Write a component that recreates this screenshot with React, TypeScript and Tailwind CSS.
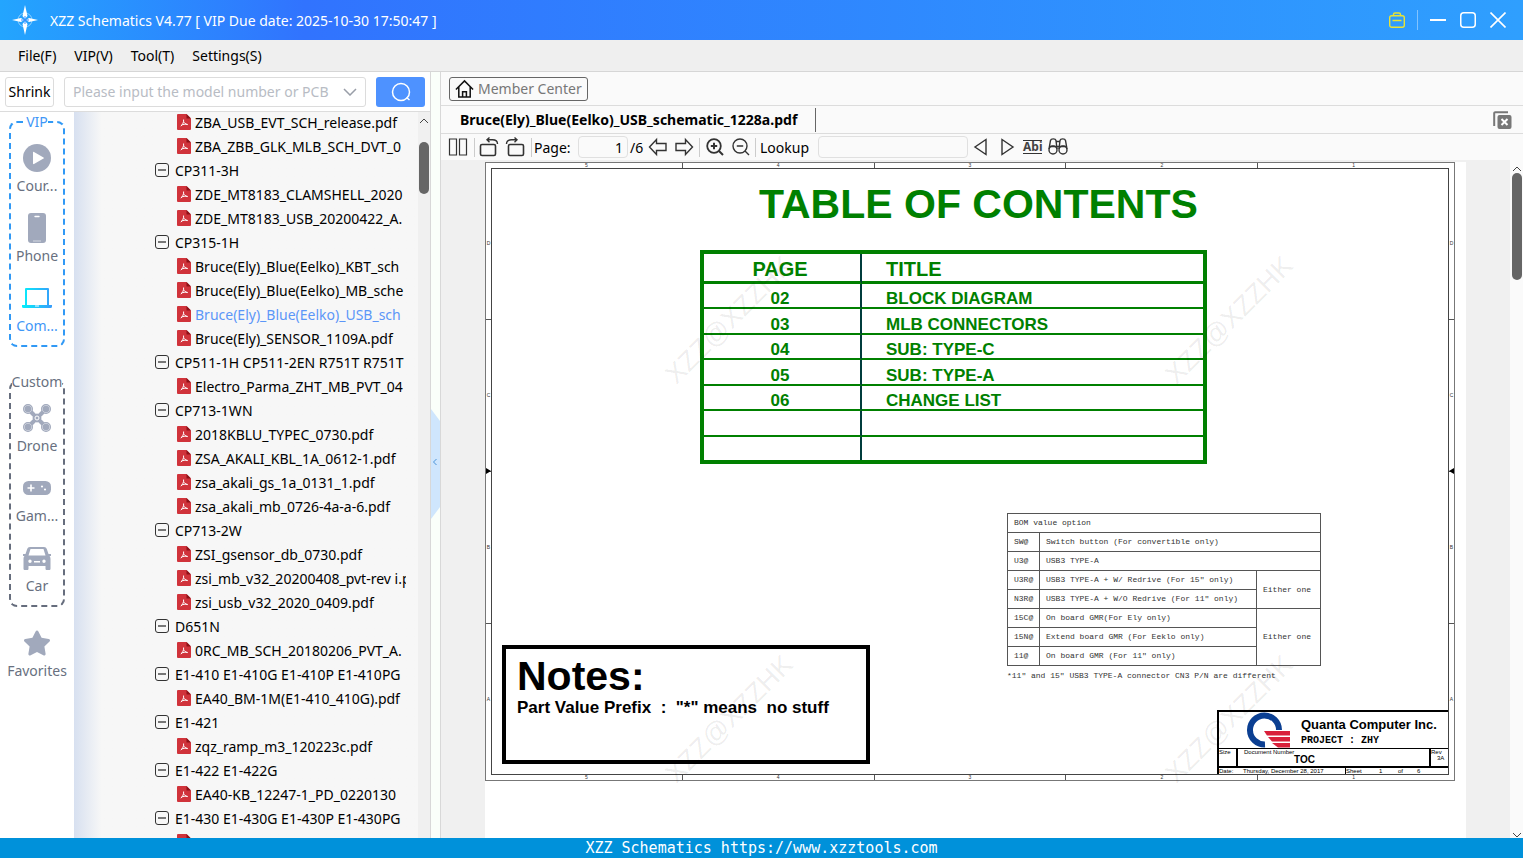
import type { ReactNode } from "react";
import { FaStar } from "react-icons/fa";

type TreeRow = { label: string; kind: "group" | "file"; active?: boolean };

const menuItems = ["File(F)", "VIP(V)", "Tool(T)", "Settings(S)"];

const group = (label: string): TreeRow => ({ label, kind: "group" });
const file = (label: string, active = false): TreeRow => ({ label, kind: "file", active });

const treeRows: TreeRow[] = [
  file("ZBA_USB_EVT_SCH_release.pdf"),
  file("ZBA_ZBB_GLK_MLB_SCH_DVT_0"),
  group("CP311-3H"),
  file("ZDE_MT8183_CLAMSHELL_2020"),
  file("ZDE_MT8183_USB_20200422_A."),
  group("CP315-1H"),
  file("Bruce(Ely)_Blue(Eelko)_KBT_sch"),
  file("Bruce(Ely)_Blue(Eelko)_MB_sche"),
  file("Bruce(Ely)_Blue(Eelko)_USB_sch", true),
  file("Bruce(Ely)_SENSOR_1109A.pdf"),
  group("CP511-1H CP511-2EN R751T R751T"),
  file("Electro_Parma_ZHT_MB_PVT_04"),
  group("CP713-1WN"),
  file("2018KBLU_TYPEC_0730.pdf"),
  file("ZSA_AKALI_KBL_1A_0612-1.pdf"),
  file("zsa_akali_gs_1a_0131_1.pdf"),
  file("zsa_akali_mb_0726-4a-a-6.pdf"),
  group("CP713-2W"),
  file("ZSI_gsensor_db_0730.pdf"),
  file("zsi_mb_v32_20200408_pvt-rev i.p"),
  file("zsi_usb_v32_2020_0409.pdf"),
  group("D651N"),
  file("0RC_MB_SCH_20180206_PVT_A."),
  group("E1-410 E1-410G E1-410P E1-410PG"),
  file("EA40_BM-1M(E1-410_410G).pdf"),
  group("E1-421"),
  file("zqz_ramp_m3_120223c.pdf"),
  group("E1-422 E1-422G"),
  file("EA40-KB_12247-1_PD_0220130"),
  group("E1-430 E1-430G E1-430P E1-430PG"),
  file("EA40-CX_04DA-430_430G_470"),
];

const tocRows = [
  ["02", "BLOCK DIAGRAM"],
  ["03", "MLB CONNECTORS"],
  ["04", "SUB: TYPE-C"],
  ["05", "SUB: TYPE-A"],
  ["06", "CHANGE LIST"],
  ["", ""],
  ["", ""],
];

const Logo = () => (
  <svg viewBox="0 0 26 30" className="h-[30px] w-[26px]">
    <circle cx="13" cy="15" r="7" fill="none" stroke="#8fd0ff" strokeWidth="1" />
    <path d="M13 0 L15.5 11 L13 14 L10.500 11 Z M13 30 L15.500 19 L13 16 L10.500 19 Z M0 15 L9 13 L12 15 L9 17 Z M26 15 L17 13 L14 15 L17 17 Z" fill="#fff" />
    <path d="M13 11v8M9 15h8" stroke="#3a8dff" strokeWidth="1" />
  </svg>
);

const PdfIcon = () => (
  <svg viewBox="0 0 14 16" className="h-4 w-3.5 shrink-0">
    <path d="M1 0h8.500L14 4.500V15a1 1 0 0 1-1 1H1a1 1 0 0 1-1-1V1a1 1 0 0 1 1-1z" fill="#d0333b" />
    <path d="M9.500 0 14 4.500h-4.500z" fill="#8d1218" />
    <path d="M6.600 5.500c.3 2.600-.9 5-2.800 6.700M6.700 7.500c.5 1.500 1.800 2.700 3.900 3.100M4.300 11.200c1.800-.9 3.700-1.200 6.300-.8" fill="none" stroke="#fff" strokeWidth="1" />
  </svg>
);

const MinusBox = () => (
  <svg viewBox="0 0 14 14" className="size-3.5 shrink-0">
    <rect x="0.500" y="0.500" width="13" height="13" rx="2.500" fill="none" stroke="#333" />
    <path d="M3 7h8" stroke="#222" strokeWidth="1.200" />
  </svg>
);

const ScrollArrow = ({ down = false }: { down?: boolean }) => (
  <svg viewBox="0 0 10 6" className="h-1.5 w-2.5" fill="none" stroke="#444">
    <path d={down ? "M1 1l4 4 4-4" : "M1 5l4-4 4 4"} />
  </svg>
);

const CourseIcon = () => (
  <svg viewBox="0 0 28 28" className="size-7">
    <circle cx="14" cy="14" r="14" fill="#a1a9bc" />
    <path d="M10 8.500c0-.6.500-.9 1-.6l9.500 5.500c.5.300.5.900 0 1.200L11 20.100c-.5.300-1 0-1-.6z" fill="#fff" />
  </svg>
);

const PhoneIcon = () => (
  <svg viewBox="0 0 18 30" className="h-[30px] w-[18px]">
    <rect width="18" height="30" rx="3" fill="#a1a9bc" />
    <path d="M7 3.500h4" stroke="#fff" strokeWidth="1.400" strokeLinecap="round" />
    <path d="M5 28h8" stroke="#d5d9e2" />
  </svg>
);

const ComputerIcon = () => (
  <svg viewBox="0 0 30 20" className="h-5 w-[30px]">
    <defs>
      <linearGradient id="laptop">
        <stop offset="0" stopColor="#05f0fb" />
        <stop offset="1" stopColor="#389cfb" />
      </linearGradient>
    </defs>
    <path fillRule="evenodd" d="M4 0h22a1 1 0 0 1 1 1v16h3v1.500a1.500 1.500 0 0 1-1.500 1.500h-27A1.500 1.500 0 0 1 0 18.500V17h3V1a1 1 0 0 1 1-1zm1 2v15h20V2zm8 15.500v1h4v-1z" fill="url(#laptop)" />
  </svg>
);

const DroneIcon = () => (
  <svg viewBox="0 0 28 28" className="size-7" fill="none" stroke="#a1a9bc">
    <path d="M6 6l16 16M22 6L6 22" strokeWidth="4" />
    <circle cx="14" cy="14" r="4" fill="#a1a9bc" />
    <circle cx="14" cy="14" r="2" stroke="#fff" strokeWidth="1" />
    {[[5, 5], [23, 5], [5, 23], [23, 23]].map(([cx, cy]) => (
      <g key={`${cx}-${cy}`}>
        <circle cx={cx} cy={cy} r="4.400" fill="#e3e6ec" strokeWidth="1.200" />
        <circle cx={cx} cy={cy} r="3.300" fill="#a1a9bc" stroke="none" />
      </g>
    ))}
  </svg>
);

const GameIcon = () => (
  <svg viewBox="0 0 28 14" className="h-3.5 w-7">
    <rect width="28" height="14" rx="5.500" fill="#a1a9bc" />
    <path d="M8 3.500v7M4.500 7h7" stroke="#fff" strokeWidth="1.600" />
    <circle cx="19" cy="5.500" r="1.100" fill="#fff" />
    <circle cx="22" cy="8.500" r="1.100" fill="#fff" />
  </svg>
);

const CarIcon = () => (
  <svg viewBox="0 0 28 23" className="h-[23px] w-7">
    <path fillRule="evenodd" fill="#a1a9bc" d="M7 0h14c1.500 0 2.300.7 2.800 2l1.700 5H28v2h-1.500c.7.800 1 1.700 1 3v9.500c0 1-.5 1.500-1.500 1.500h-2c-1 0-1.500-.5-1.500-1.500V19h-17v2.500C5.500 22.500 5 23 4 23H2c-1 0-1.500-.5-1.500-1.500V12c0-1.300.3-2.200 1-3H0V7h2.500l1.700-5C4.700.7 5.500 0 7 0zM7.500 2 5.500 8.500h17L20.500 2zM7 12.500a1.700 1.700 0 1 0 0 3.400 1.700 1.700 0 0 0 0-3.400zm14 0a1.700 1.700 0 1 0 0 3.400 1.700 1.700 0 0 0 0-3.400zM11 14v1.500h6V14z" />
  </svg>
);

type NavItemProps = { label: string; icon: ReactNode; active?: boolean };

const NavItem = ({ label, icon, active }: NavItemProps) => (
  <button type="button" className="flex h-[70px] w-full flex-col items-center pt-2">
    <span className="flex h-9 items-center">{icon}</span>
    <span className={active ? "leading-5 text-[#3f97f7]" : "leading-5 text-[#687080]"}>{label}</span>
  </button>
);

const TitleBar = () => (
  <header className="flex h-10 shrink-0 items-center bg-linear-to-r from-[#23a5fe] via-[#3173fe] via-20% to-[#2f9ffe] pr-[17px] pl-3 text-white">
    <Logo />
    <h1 className="ml-3">XZZ Schematics V4.77 [ VIP Due date: 2025-10-30 17:50:47 ]</h1>
    <div className="ml-auto flex items-center">
      <button type="button" aria-label="Membership">
        <svg viewBox="0 0 16 16" className="size-4" fill="none" stroke="#e8e337" strokeWidth="1.400">
          <rect x="0.700" y="3.700" width="14.600" height="11.600" rx="2" />
          <path d="M4.500 3.500v-1a1.500 1.500 0 0 1 1.500-1.500h4a1.500 1.500 0 0 1 1.500 1.500v1M3.500 8.500h9" />
        </svg>
      </button>
      <span className="mx-3 h-5 w-px bg-white/40" />
      <div className="flex gap-3.5">
        <button type="button" aria-label="Minimize">
          <svg viewBox="0 0 16 16" className="size-4" stroke="#fff" strokeWidth="2"><path d="M0 8h16" /></svg>
        </button>
        <button type="button" aria-label="Maximize">
          <svg viewBox="0 0 16 16" className="size-4" fill="none" stroke="#fff" strokeWidth="1.500"><rect x="0.750" y="0.750" width="14.500" height="14.500" rx="3" /></svg>
        </button>
        <button type="button" aria-label="Close">
          <svg viewBox="0 0 16 16" className="size-4" stroke="#fff" strokeWidth="1.600"><path d="M0.500 0.500l15 15M15.500 0.500l-15 15" /></svg>
        </button>
      </div>
    </div>
  </header>
);

const SearchRow = () => (
  <form className="flex h-10 shrink-0 items-center border-b border-[#dcdcdc] bg-white px-[5px]">
    <button type="button" className="h-[30px] w-[49px] rounded-[3px] border border-[#dcdcdc]">Shrink</button>
    <div className="ml-2.5 flex h-[30px] flex-1 items-center rounded-[3px] border border-[#dcdcdc] px-2">
      <input type="text" aria-label="Model number" placeholder="Please input the model number or PCB" className="w-0 flex-1 outline-none placeholder:text-[#b8bcc4]" />
      <svg viewBox="0 0 14 8" className="ml-1 h-2 w-3.5" fill="none" stroke="#999ea8" strokeWidth="1.500"><path d="M1 1l6 6 6-6" /></svg>
    </div>
    <button type="submit" aria-label="Search" className="ml-2.5 flex h-[30px] w-[49px] items-center justify-center rounded-[3px] bg-[#4e92ff]">
      <svg viewBox="0 0 20 20" className="size-5" fill="none" stroke="#fff" strokeWidth="1.500"><circle cx="10" cy="10" r="8.500" /><path d="M15.500 15.500l3 2.500" /></svg>
    </button>
  </form>
);

const Sidebar = () => (
  <nav className="w-[74px] shrink-0 bg-white px-[9px]">
    <fieldset className="rounded-lg border-2 border-dashed border-[#3199f5] pb-[3px]">
      <legend className="mx-auto leading-5 text-[#3f97f7]">VIP</legend>
      <NavItem label="Cour..." icon={<CourseIcon />} />
      <NavItem label="Phone" icon={<PhoneIcon />} />
      <NavItem label="Com..." icon={<ComputerIcon />} active />
    </fieldset>
    <fieldset className="mt-[25px] rounded-lg border-2 border-dashed border-[#666d7d] pb-[3px]">
      <legend className="mx-auto leading-5 text-[#687080]">Custom</legend>
      <NavItem label="Drone" icon={<DroneIcon />} />
      <NavItem label="Gam..." icon={<GameIcon />} />
      <NavItem label="Car" icon={<CarIcon />} />
    </fieldset>
    <div className="mt-2.5">
      <NavItem label="Favorites" icon={<FaStar className="size-7 text-[#a1a9bc]" />} />
    </div>
  </nav>
);

const FileTree = () => (
  <div className="min-w-0 flex-1 overflow-hidden bg-linear-to-r from-[#d7e0f0] to-[#f7f7f7] to-8% pr-3">
    <ul className="-mt-0.5 overflow-hidden">
      {treeRows.map(({ label, kind, active }) => (
        <li key={label}>
          {kind === "group" ? (
            <button type="button" className="flex h-6 items-center gap-1.5 pl-[81px] whitespace-nowrap">
              <MinusBox />
              {label}
            </button>
          ) : (
            <button type="button" className={`flex h-6 items-center gap-1 pl-[103px] whitespace-nowrap ${active ? "text-[#5c96f8]" : ""}`}>
              <PdfIcon />
              {label}
            </button>
          )}
        </li>
      ))}
    </ul>
  </div>
);

const Splitter = () => (
  <div className="flex w-2.5 shrink-0 items-center border-r border-[#d8d8d8] bg-[#fafffa] pt-[18px]">
    <button type="button" aria-label="Collapse panel">
      <svg viewBox="0 0 9 110" className="h-[110px] w-[9px]">
        <path d="M0 0l9 12v86l-9 12z" fill="#cfe6fd" />
        <path d="M5.500 50l-3 3 3 3" fill="none" stroke="#4a93d8" />
      </svg>
    </button>
  </div>
);

const ToolButton = ({ label, children }: { label: string; children: ReactNode }) => (
  <button type="button" aria-label={label} className="shrink-0">
    <svg viewBox="0 0 20 20" className="size-5" fill="none" stroke="#333" strokeWidth="1.400">{children}</svg>
  </button>
);

const Divider = () => <span className="h-[19px] w-px shrink-0 bg-[#ccc]" />;

const Toolbar = () => (
  <div className="flex h-[26px] shrink-0 items-center bg-[#fafafa] pl-[7px]">
    <ToolButton label="Two pages"><path d="M1.500 2h7v16h-7zM11.500 2h7v16h-7z" strokeWidth="1.200" /></ToolButton>
    <div className="mr-1 ml-1.5 flex"><Divider /></div>
    <div className="mr-1.5 flex gap-1.5">
      <ToolButton label="Rotate left"><rect x="1.500" y="7.500" width="15" height="11" rx="1.500" strokeWidth="1.600" /><path d="M18.500 7c0-3-2.500-4.200-5-4.200H8M10.500 .5L8 2.800l2.500 2.500" /></ToolButton>
      <ToolButton label="Rotate right"><rect x="3.500" y="7.500" width="15" height="11" rx="1.500" strokeWidth="1.600" /><path d="M1.500 7c0-3 2.500-4.200 5-4.200h5.500M9.500 .5L12 2.800l-2.500 2.500" /></ToolButton>
    </div>
    <Divider />
    <label htmlFor="page" className="ml-0.5 w-11">Page:</label>
    <input id="page" defaultValue="1" className="h-[22px] w-[50px] rounded-sm border border-[#e0e0e0] pr-1 text-right outline-none" />
    <span className="mr-0.5 ml-0.5 w-4">/6</span>
    <div className="mr-[5px] flex gap-1.5">
      <ToolButton label="Previous page"><path d="M1.500 10l7-7.500V6.500h9.500v7H8.500v4z" /></ToolButton>
      <ToolButton label="Next page"><path d="M18.500 10l-7-7.500V6.500H2v7h9.500v4z" /></ToolButton>
    </div>
    <Divider />
    <div className="mr-1 ml-[5px] flex gap-1.5">
      <ToolButton label="Zoom in"><circle cx="9" cy="9" r="6.800" strokeWidth="1.800" /><path d="M14 14l4 4M9 5.800v6.400M5.800 9h6.400" strokeWidth="2" /></ToolButton>
      <ToolButton label="Zoom out"><circle cx="9" cy="9" r="7" /><path d="M14 14l4 4M5.800 9h6.400" /></ToolButton>
    </div>
    <Divider />
    <label htmlFor="lookup" className="ml-1 w-[58px]">Lookup</label>
    <input id="lookup" className="h-[22px] w-[150px] rounded-sm border border-[#e0e0e0] outline-none" />
    <div className="ml-[3px] flex items-center gap-1.5">
      <ToolButton label="Find previous"><path d="M15 2.500v15L4 10z" /></ToolButton>
      <ToolButton label="Find next"><path d="M5 2.500v15L16 10z" /></ToolButton>
      <button type="button" className="border-y border-[#333] text-[12px] leading-3 font-bold text-[#444]">Abi</button>
      <ToolButton label="Find">
        <circle cx="5" cy="13" r="4" /><circle cx="15" cy="13" r="4" />
        <path d="M1 12l1.500-8.500c.5-2.200 5-2.200 5.500 0L9 12M19 12l-1.500-8.500c-.5-2.200-5-2.200-5.500 0L11 12M8 4.500h4M9 9.500h2M1.500 9.500h7M11.500 9.500h7" />
      </ToolButton>
    </div>
  </div>
);

const ZoneNumbers = ({ side }: { side: "top" | "bottom" }) => (
  <div className="mx-[5px] flex h-[5px] text-[#333]">
    {[5, 4, 3, 2, 1].map((zone) => (
      <span key={`${side}-${zone}`} className="flex-1 border-r border-[#555] text-center text-[5px] leading-[5px] last:border-r-0">{zone}</span>
    ))}
  </div>
);

const ZoneLetters = ({ side }: { side: "left" | "right" }) => (
  <div className="flex w-[5px] shrink-0 flex-col text-[#333]">
    {["D", "C", "B", "A"].map((zone) => (
      <span key={`${side}-${zone}`} className="relative flex flex-1 items-center justify-center border-b border-[#555] text-[5px] last:border-b-0">
        {zone}
        {zone === "C" && (
          <svg viewBox="0 0 5 6" className={`absolute right-0 -bottom-[3px] h-1.5 w-[5px] ${side === "right" ? "rotate-180" : ""}`}><path d="M0 0l5 3-5 3z" /></svg>
        )}
      </span>
    ))}
  </div>
);

const TocTable = () => (
  <table className="mt-6 ml-52 w-[507px] table-fixed border-separate border-spacing-0 border-4 border-[#008000] font-bold text-[#008000]">
    <thead>
      <tr className="h-[30px] text-[20px] leading-6">
        <th className="w-[158px] border-r-2 border-b-3 border-r-[#003c3c] border-b-[#008000] p-0 pr-1 align-bottom">PAGE</th>
        <th className="border-b-3 border-[#008000] p-0 pl-6 text-left align-bottom">TITLE</th>
      </tr>
    </thead>
    <tbody className="text-[17px] leading-4">
      {tocRows.map(([page, title], index) => (
        <tr key={index} className="group h-[25px] last:h-[23px] even:h-[26px]">
          <td className="border-r-2 border-b-2 border-r-[#003c3c] border-b-[#008000] p-0 pr-1 text-center align-bottom group-last:border-b-0">{page}</td>
          <td className="border-b-2 border-[#008000] p-0 pl-6 align-bottom group-last:border-b-0">{title}</td>
        </tr>
      ))}
    </tbody>
  </table>
);

const bomCell = "border border-[#555] px-1.5 py-0 font-normal";

const BomTable = () => (
  <table className="h-[153px] w-[314px] table-fixed border-collapse text-left">
    <colgroup>
      <col className="w-8" />
      <col />
      <col className="w-16" />
    </colgroup>
    <tbody>
      <tr><th colSpan={3} className={bomCell}>BOM value option</th></tr>
      <tr><td className={bomCell}>SW@</td><td colSpan={2} className={bomCell}>Switch button (For convertible only)</td></tr>
      <tr><td className={bomCell}>U3@</td><td colSpan={2} className={bomCell}>USB3 TYPE-A</td></tr>
      <tr><td className={bomCell}>U3R@</td><td className={bomCell}>USB3 TYPE-A + W/ Redrive (For 15" only)</td><td rowSpan={2} className={bomCell}>Either one</td></tr>
      <tr><td className={bomCell}>N3R@</td><td className={bomCell}>USB3 TYPE-A + W/O Redrive (For 11" only)</td></tr>
      <tr><td className={bomCell}>15C@</td><td className={bomCell}>On board GMR(For Ely only)</td><td rowSpan={3} className={bomCell}>Either one</td></tr>
      <tr><td className={bomCell}>15N@</td><td className={bomCell}>Extend board GMR (For Eeklo only)</td></tr>
      <tr><td className={bomCell}>11@</td><td className={bomCell}>On board GMR (For 11" only)</td></tr>
    </tbody>
  </table>
);

const QuantaLogo = () => (
  <svg viewBox="0 0 44 36" className="h-9 w-11">
    <path d="M18 32.500A14.500 14.500 0 1 1 32 18" fill="none" stroke="#0b3f92" strokeWidth="6" />
    <path d="M17 19h26v4.500H20zM21 25h22v4.500H25zM25 31h18v4.500H31z" fill="#d9203a" />
  </svg>
);

const TitleBlock = () => (
  <div className="mt-auto w-[231px] border-t-2 border-l-2 border-black text-[6px] leading-[6px]">
    <div className="flex h-[37px] border-b border-black pl-7 font-bold">
      <QuantaLogo />
      <div className="pt-1 pl-2.5">
        <p className="text-[13px] leading-[17px]">Quanta Computer Inc.</p>
        <p className="font-['Liberation_Mono',monospace] text-[10px] leading-4">PROJECT : ZHY</p>
      </div>
    </div>
    <div className="flex h-[19px] border-b-2 border-black">
      <span className="w-[19px] border-r-2 border-black">Size</span>
      <div className="flex-1 pl-1.5">
        <p>Document Number</p>
        <p className="pr-16 text-center text-[10px] leading-[10px] font-bold">TOC</p>
      </div>
      <div className="w-[19px] border-l-2 border-black">
        <p>Rev</p>
        <p className="pl-1.5">3A</p>
      </div>
    </div>
    <div className="flex h-[6px]">
      <span className="w-6">Date:</span>
      <span className="flex-1">Thursday, December 28, 2017</span>
      <span className="w-[34px] border-l border-black">Sheet</span>
      <span className="w-[19px]">1</span>
      <span className="w-[19px]">of</span>
      <span className="w-[31px]">6</span>
    </div>
  </div>
);

const Watermark = ({ className }: { className: string }) => (
  <span aria-hidden="true" className={`pointer-events-none absolute w-[176px] -rotate-45 text-center text-[27px] leading-8 text-black/8 ${className}`}>XZZ@XZZHK</span>
);

const Sheet = () => (
  <article className="relative flex h-[619px] flex-col border border-[#777] font-['Liberation_Sans',Arial,sans-serif] text-black">
    <ZoneNumbers side="top" />
    <div className="flex min-h-0 flex-1">
      <ZoneLetters side="left" />
      <div className="flex flex-1 flex-col border border-[#444]">
        <h2 className="mt-[13px] ml-[267px] text-[41px] leading-11 font-bold text-[#008000]">TABLE OF CONTENTS</h2>
        <TocTable />
        <div className="flex flex-1 justify-between">
          <section className="mb-2.5 ml-2.5 h-[119px] w-[368px] self-end border-4 border-black pt-1 pl-[11px] font-bold">
            <h3 className="text-[41px] leading-[46px]">Notes:</h3>
            <p className="text-[17px] leading-[18px] whitespace-pre">{'Part Value Prefix  :  "*" means  no stuff'}</p>
          </section>
          <div className="flex flex-col items-end">
            <div className="mt-[49px] mr-[127px] font-['Liberation_Mono',monospace] text-[8px] leading-[10px] text-[#333]">
              <BomTable />
              <p className="leading-5">*11" and 15" USB3 TYPE-A connector CN3 P/N are different</p>
            </div>
            <TitleBlock />
          </div>
        </div>
      </div>
      <ZoneLetters side="right" />
    </div>
    <ZoneNumbers side="bottom" />
    <Watermark className="top-[141px] left-[155px]" />
    <Watermark className="top-[141px] left-[655px]" />
    <Watermark className="top-[540px] left-[155px]" />
    <Watermark className="top-[540px] left-[655px]" />
  </article>
);

const Viewer = () => (
  <main className="flex min-w-0 flex-1 flex-col">
    <div className="flex h-[34px] shrink-0 items-center border-b border-[#dcdcdc] bg-[#fafafa] pl-2">
      <button type="button" className="flex h-6 items-center gap-1 rounded-[3px] border border-[#666] px-[5px] text-[#777]">
        <svg viewBox="0 0 20 20" className="size-[19px]" fill="none" stroke="#111" strokeWidth="1.600"><path d="M1 11l9-9 9 9M4 8.500V19h12V8.500M8 19v-5.500h4V19" /></svg>
        Member Center
      </button>
    </div>
    <div className="flex h-7 shrink-0 items-center border-b border-[#dcdcdc] bg-[#fafafa] pr-[11px] pl-[19px]">
      <button type="button" className="h-6 border-r border-[#666] pr-[18px] font-bold">Bruce(Ely)_Blue(Eelko)_USB_schematic_1228a.pdf</button>
      <button type="button" aria-label="Close all tabs" className="ml-auto">
        <svg viewBox="0 0 19 18" className="h-[18px] w-[19px]">
          <path d="M1.200 15V2.200A1 1 0 0 1 2.200 1.200H15" fill="none" stroke="#777" strokeWidth="2" />
          <rect x="4.500" y="4" width="14" height="14" rx="2" fill="#777" />
          <path d="M8.500 8l6 6M14.500 8l-6 6" stroke="#fff" strokeWidth="2" />
        </svg>
      </button>
    </div>
    <Toolbar />
    <div className="flex min-h-0 flex-1 bg-[#f0f0f0]">
      <div className="mt-0.5 min-w-0 flex-1 overflow-hidden px-11">
        <div className="h-full bg-white pr-[11px]">
          <Sheet />
        </div>
      </div>
      <div className="flex w-[13px] shrink-0 flex-col items-center justify-between bg-[#fafafa] pt-1.5">
        <div className="flex flex-col items-center gap-px">
          <ScrollArrow />
          <div className="h-[107px] w-2.5 rounded-full bg-[#666]" />
        </div>
        <ScrollArrow down />
      </div>
    </div>
  </main>
);

export default function App() {
  return (
    <div className="flex h-screen flex-col overflow-hidden bg-white font-['Noto_Sans','Open_Sans',sans-serif] text-[14px] text-black">
      <TitleBar />
      <nav className="flex h-8 shrink-0 items-center gap-[18px] border-b border-[#d6d6d6] bg-[#efefef] pl-[18px]">
        {menuItems.map((item) => (
          <button key={item} type="button">{item}</button>
        ))}
      </nav>
      <div className="flex min-h-0 flex-1">
        <aside className="flex w-[431px] shrink-0 flex-col border-r border-[#d8d8d8]">
          <SearchRow />
          <div className="flex min-h-0 flex-1">
            <Sidebar />
            <FileTree />
            <div className="flex w-3 shrink-0 flex-col items-center gap-[18px] bg-[#f0f0f0] pt-1.5">
              <ScrollArrow />
              <div className="h-[52px] w-2.5 rounded-full bg-[#666]" />
            </div>
          </div>
        </aside>
        <Splitter />
        <Viewer />
      </div>
      <footer className="flex h-5 shrink-0 items-center justify-center bg-[#0091da] font-['DejaVu_Sans_Mono',monospace] text-[15px] text-white">
        XZZ Schematics https://www.xzztools.com
      </footer>
    </div>
  );
}
